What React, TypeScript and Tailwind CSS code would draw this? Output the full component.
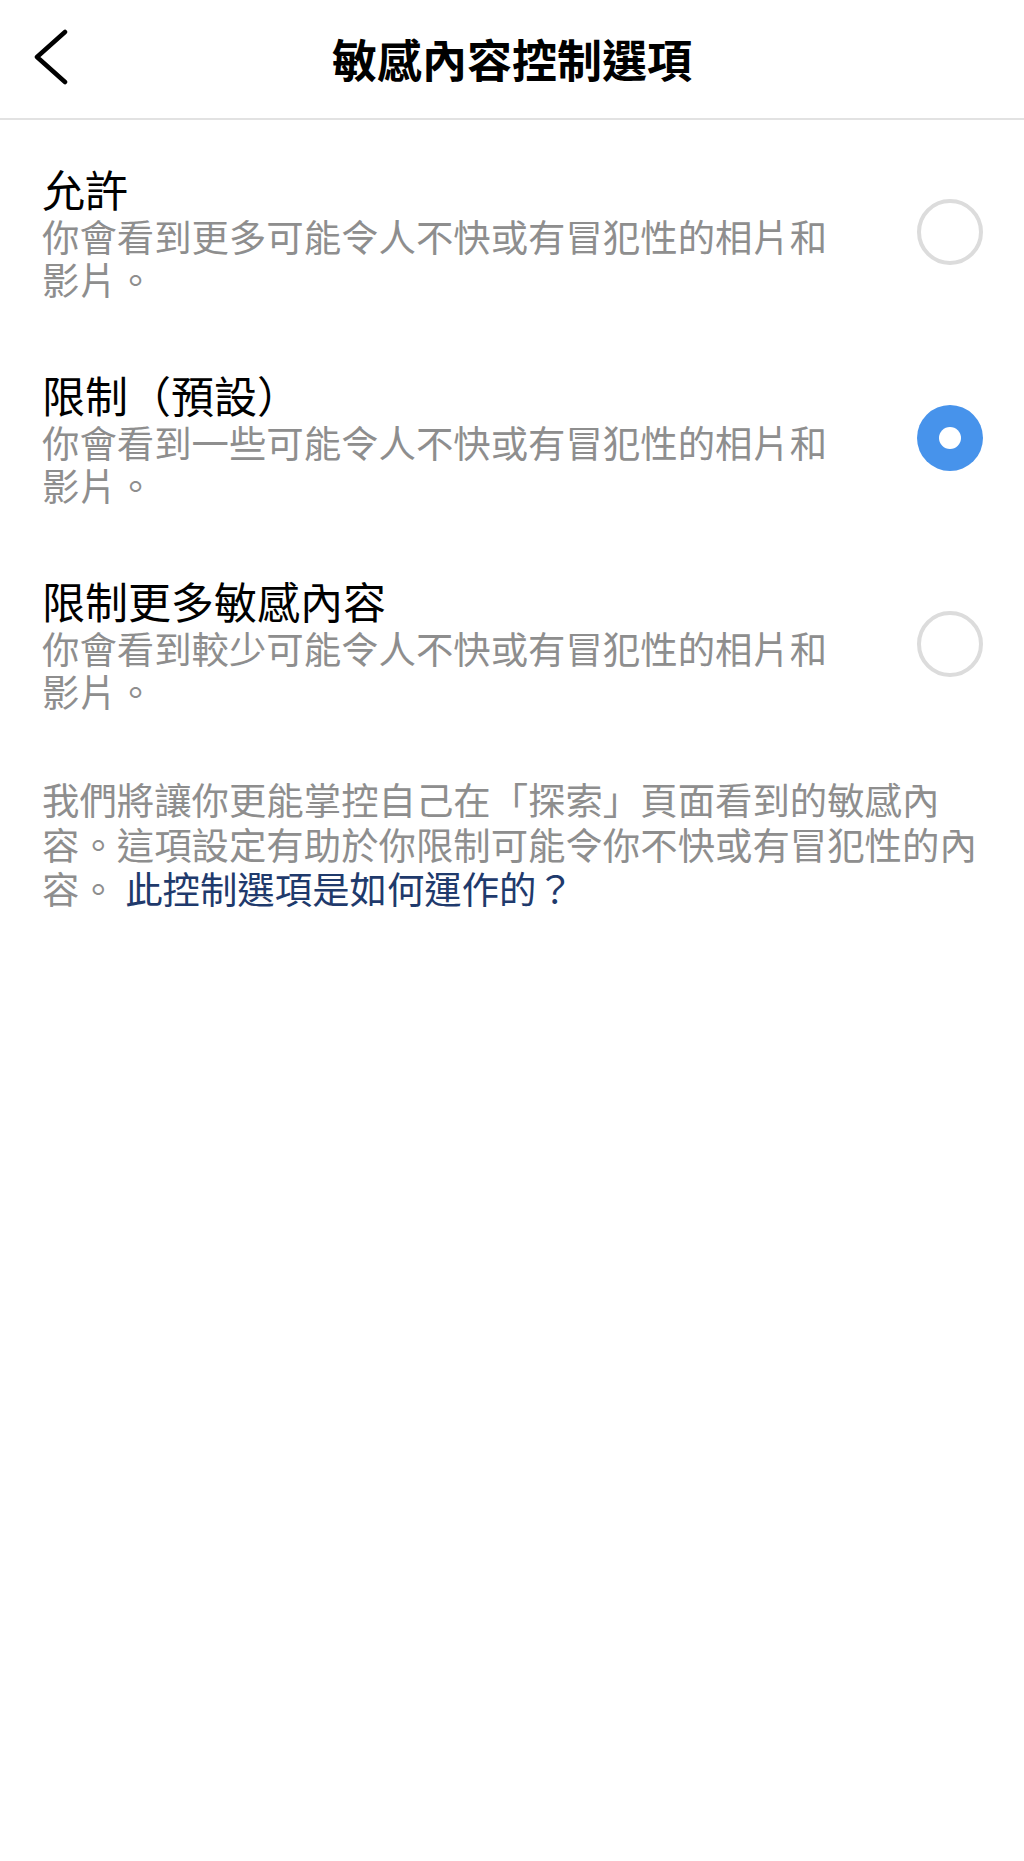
import React from "react";

const options = [
  { title: "允許", desc: "你會看到更多可能令人不快或有冒犯性的相片和影片。", selected: false },
  { title: "限制（預設）", desc: "你會看到一些可能令人不快或有冒犯性的相片和影片。", selected: true },
  { title: "限制更多敏感內容", desc: "你會看到較少可能令人不快或有冒犯性的相片和影片。", selected: false },
];

function Radio({ selected }: { selected: boolean }) {
  if (selected) {
    return (
      <div className="w-[66px] h-[66px] rounded-full bg-[#4793eb] flex items-center justify-center shrink-0">
        <div className="w-[22px] h-[22px] rounded-full bg-white" />
      </div>
    );
  }
  return <div className="w-[66px] h-[66px] rounded-full border-[4px] border-[#dcdcdc] shrink-0" />;
}

export default function App() {
  return (
    <div className="min-h-[1861px] bg-white font-['Noto_Sans_CJK_TC','Noto_Sans_CJK_SC',sans-serif] text-black">
      <header className="h-[120px] flex items-center px-[32px] border-b-2 border-[#e2e2e2]">
        <div className="w-[60px] flex items-center">
          <svg width="40" height="60" viewBox="0 0 40 60" fill="none">
            <polyline
              points="33,3 5,28 33,53"
              stroke="#000"
              strokeWidth="4.5"
              strokeLinecap="round"
              strokeLinejoin="round"
            />
          </svg>
        </div>
        <h1 className="flex-1 text-center text-[45px] font-bold leading-[60px]">敏感內容控制選項</h1>
        <div className="w-[60px]" />
      </header>

      <main className="pt-[43px]">
        <div className="flex flex-col gap-[68px]">
          {options.map((o) => (
            <div key={o.title} className="flex items-center pl-[42px] pr-[41px]">
              <div className="w-[805px]">
                <div className="text-[43px] leading-[50px] text-black">{o.title}</div>
                <div className="mt-[2px] text-[37.4px] leading-[43px] text-[#8e8e8e]">{o.desc}</div>
              </div>
              <div className="ml-auto">
                <Radio selected={o.selected} />
              </div>
            </div>
          ))}
        </div>

        <p className="mt-[64px] pl-[42px] pr-[42px] text-[37.4px] leading-[44.5px] text-[#8e8e8e]">
          我們將讓你更能掌控自己在「探索」頁面看到的敏感內容。這項設定有助於你限制可能令你不快或有冒犯性的內容。{" "}
          <span className="text-[#1f3a6c]">此控制選項是如何運作的？</span>
        </p>
      </main>
    </div>
  );
}
